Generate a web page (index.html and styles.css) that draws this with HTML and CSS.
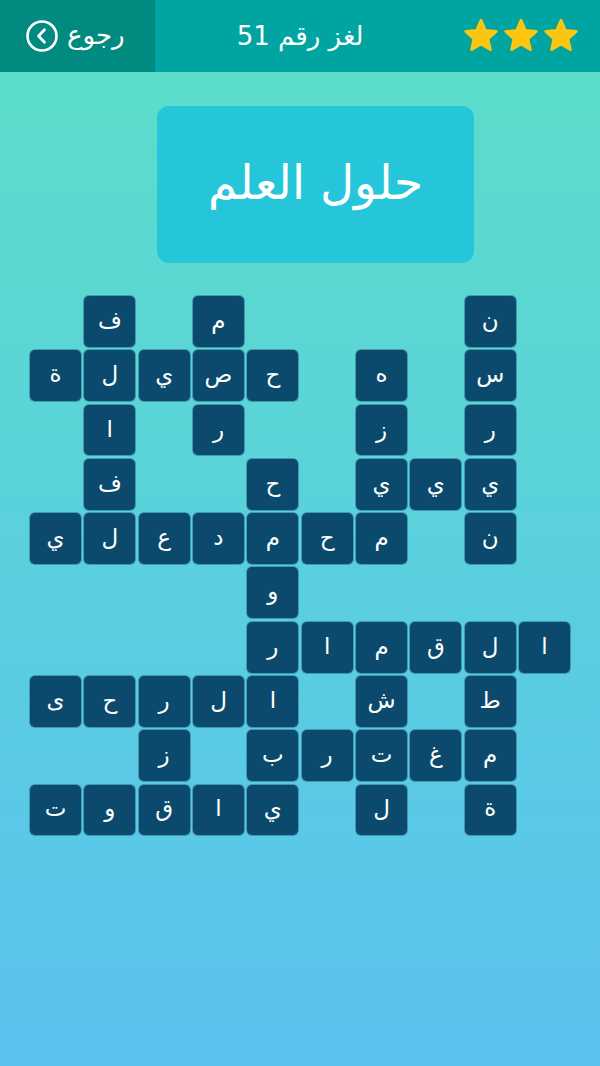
FILE: index.html
```html
<!DOCTYPE html>
<html lang="ar">
<head>
<meta charset="utf-8">
<link rel="stylesheet" href="styles.css">
</head>
<body>
<div class="page">
  <header class="topbar">
    <div class="back">
      <svg class="back-icon" width="34" height="34" viewBox="0 0 34 34">
        <circle cx="17" cy="17" r="14.5" fill="none" stroke="#fff" stroke-width="2.6"/>
        <path d="M19.5 10.8 L13.5 17 L19.5 23.2" fill="none" stroke="#fff" stroke-width="2.8" stroke-linecap="round" stroke-linejoin="round"/>
      </svg>
      <span class="back-text">رجوع</span>
    </div>
    <div class="title">لغز رقم 51</div>
    <div class="stars">
      <svg class="star" viewBox="0 0 40 40"><path d="M20 3.5 L24.6 14.2 L36 15.3 L27.3 23 L29.9 34.3 L20 28.4 L10.1 34.3 L12.7 23 L4 15.3 L15.4 14.2 Z" fill="#fcc510" stroke="#fcc510" stroke-width="3" stroke-linejoin="round"/></svg>
      <svg class="star" viewBox="0 0 40 40"><path d="M20 3.5 L24.6 14.2 L36 15.3 L27.3 23 L29.9 34.3 L20 28.4 L10.1 34.3 L12.7 23 L4 15.3 L15.4 14.2 Z" fill="#fcc510" stroke="#fcc510" stroke-width="3" stroke-linejoin="round"/></svg>
      <svg class="star" viewBox="0 0 40 40"><path d="M20 3.5 L24.6 14.2 L36 15.3 L27.3 23 L29.9 34.3 L20 28.4 L10.1 34.3 L12.7 23 L4 15.3 L15.4 14.2 Z" fill="#fcc510" stroke="#fcc510" stroke-width="3" stroke-linejoin="round"/></svg>
    </div>
  </header>

  <main class="content">
    <div class="clue">حلول العلم</div>

    <div class="grid">
      <div class="e"></div><div class="c">ف</div><div class="e"></div><div class="c">م</div><div class="e"></div><div class="e"></div><div class="e"></div><div class="e"></div><div class="c">ن</div><div class="e"></div>
      <div class="c">ة</div><div class="c">ل</div><div class="c">ي</div><div class="c">ص</div><div class="c">ح</div><div class="e"></div><div class="c">ه</div><div class="e"></div><div class="c">س</div><div class="e"></div>
      <div class="e"></div><div class="c">ا</div><div class="e"></div><div class="c">ر</div><div class="e"></div><div class="e"></div><div class="c">ز</div><div class="e"></div><div class="c">ر</div><div class="e"></div>
      <div class="e"></div><div class="c">ف</div><div class="e"></div><div class="e"></div><div class="c">ح</div><div class="e"></div><div class="c">ي</div><div class="c">ي</div><div class="c">ي</div><div class="e"></div>
      <div class="c">ي</div><div class="c">ل</div><div class="c">ع</div><div class="c">د</div><div class="c">م</div><div class="c">ح</div><div class="c">م</div><div class="e"></div><div class="c">ن</div><div class="e"></div>
      <div class="e"></div><div class="e"></div><div class="e"></div><div class="e"></div><div class="c">و</div><div class="e"></div><div class="e"></div><div class="e"></div><div class="e"></div><div class="e"></div>
      <div class="e"></div><div class="e"></div><div class="e"></div><div class="e"></div><div class="c">ر</div><div class="c">ا</div><div class="c">م</div><div class="c">ق</div><div class="c">ل</div><div class="c">ا</div>
      <div class="c">ى</div><div class="c">ح</div><div class="c">ر</div><div class="c">ل</div><div class="c">ا</div><div class="e"></div><div class="c">ش</div><div class="e"></div><div class="c">ط</div><div class="e"></div>
      <div class="e"></div><div class="e"></div><div class="c">ز</div><div class="e"></div><div class="c">ب</div><div class="c">ر</div><div class="c">ت</div><div class="c">غ</div><div class="c">م</div><div class="e"></div>
      <div class="c">ت</div><div class="c">و</div><div class="c">ق</div><div class="c">ا</div><div class="c">ي</div><div class="e"></div><div class="c">ل</div><div class="e"></div><div class="c">ة</div><div class="e"></div>
    </div>
  </main>
</div>
</body>
</html>
```

FILE: styles.css
```css
html, body {
  margin: 0;
  padding: 0;
}

body {
  font-family: "DejaVu Sans", "Noto Sans", sans-serif;
  width: 600px;
  height: 1066px;
  overflow: hidden;
}

.page {
  width: 600px;
  height: 1066px;
  display: flex;
  flex-direction: column;
  background: linear-gradient(180deg, #5ddfc7 0%, #5ad1dc 50%, #5ac1ef 100%);
}

.topbar {
  height: 72px;
  background: #00a4a1;
  display: flex;
  align-items: center;
  position: relative;
}

.back {
  width: 155px;
  height: 72px;
  background: #008a80;
  display: flex;
  align-items: center;
  gap: 8px;
  padding-left: 25px;
  box-sizing: border-box;
}

.back-icon {
  display: block;
}

.back-text {
  color: #fff;
  font-size: 26px;
  line-height: 1;
  padding-bottom: 2px;
}

.title {
  position: absolute;
  left: 150px;
  right: 150px;
  top: 0;
  height: 72px;
  display: flex;
  align-items: center;
  justify-content: center;
  color: #fff;
  font-size: 26px;
  box-sizing: border-box;
}

.stars {
  margin-left: auto;
  margin-right: 20px;
  display: flex;
  gap: 2px;
}

.star {
  width: 38px;
  height: 38px;
  display: block;
}

.content {
  display: flex;
  flex-direction: column;
  align-items: center;
}

.clue {
  margin-top: 34px;
  margin-left: 31px;
  width: 317px;
  height: 157px;
  border-radius: 12px;
  background: #26c6da;
  color: #fff;
  font-size: 47px;
  display: flex;
  align-items: center;
  justify-content: center;
  padding-bottom: 4px;
  box-sizing: border-box;
}

.grid {
  margin-top: 33px;
  width: 540px;
  display: grid;
  grid-template-columns: repeat(10, 1fr);
  grid-auto-rows: 50.9px;
  gap: 3.4px;
}

.c {
  background: #0b4a6d;
  border-radius: 5px;
  box-shadow: 0 0 0 1px rgba(40, 110, 140, 0.55);
  color: #fff;
  font-size: 23px;
  display: flex;
  align-items: center;
  justify-content: center;
  padding-bottom: 3px;
  box-sizing: border-box;
}
```
